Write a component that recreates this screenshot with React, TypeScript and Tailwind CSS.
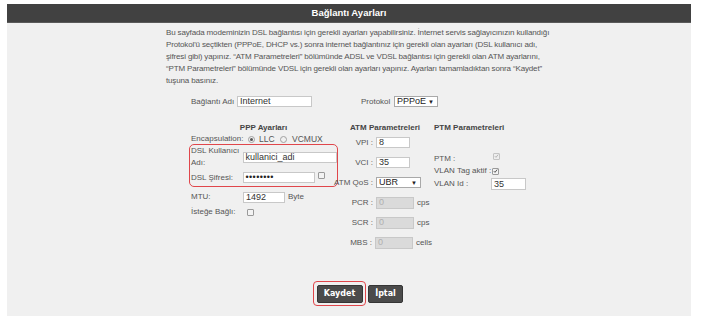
import React from "react";

const F = "font-['Liberation_Sans',Arial,sans-serif]";

function TextInput({ w, value, h = "h-[11px]", disabled = false, pw = false }: { w: string; value: string; h?: string; disabled?: boolean; pw?: boolean }) {
  return (
    <div
      className={`${w} ${h} border border-[#c8c8c8] ${disabled ? "bg-[#dadada] text-[#b0b0b0]" : "bg-white text-[#333]"} flex items-center pl-[2px] text-[9px] leading-none overflow-hidden`}
    >
      {pw ? <span className="tracking-[0.4px] text-[9px] text-[#222]">••••••••</span> : value}
    </div>
  );
}

function Select({ w, value }: { w: string; value: string }) {
  return (
    <div className={`${w} h-[11px] border border-[#a9a9a9] bg-white flex items-center justify-between pl-[2px] pr-[3px] text-[9px] leading-none text-[#222]`}>
      <span>{value}</span>
      <span className="text-[6px]">▼</span>
    </div>
  );
}

function Checkbox({ checked = false, disabled = false }: { checked?: boolean; disabled?: boolean }) {
  return (
    <div className={`w-[7px] h-[7px] border ${disabled ? "border-[#c4c4c4] bg-[#eeeeee]" : "border-[#9a9a9a] bg-[#f3f3f3]"} rounded-[1px] flex items-center justify-center`}>
      {checked && (
        <svg width="6" height="6" viewBox="0 0 6 6">
          <path d="M1 3.2 L2.4 4.6 L5 1.3" fill="none" stroke={disabled ? "#a8a8a8" : "#333"} strokeWidth="1" />
        </svg>
      )}
    </div>
  );
}

function Radio({ checked = false }: { checked?: boolean }) {
  return (
    <div className="w-[7px] h-[7px] rounded-full border border-[#a0a0a0] bg-[#f0f0f0] flex items-center justify-center">
      {checked && <div className="w-[3px] h-[3px] rounded-full bg-[#555]" />}
    </div>
  );
}

function AtmRow({ label, children, mt = "mt-[7px]" }: { label: string; children: React.ReactNode; mt?: string }) {
  return (
    <div className={`flex items-center h-[13px] ${mt}`}>
      <div className="w-[35px] flex justify-end whitespace-nowrap">{label}</div>
      <div className="ml-[3px] flex items-center">{children}</div>
    </div>
  );
}

export default function App() {
  return (
    <div className={`w-[702px] h-[318px] bg-white pt-[4px] pl-[7px] ${F} text-[8px] text-[#555]`}>
      <div className="w-[684px]">
        <div className="h-[19px] bg-[#414141] border-b border-[#5a5a5a] flex items-center justify-center text-white font-bold text-[9.5px]">
          Bağlantı Ayarları
        </div>
        <div className="h-[293px] bg-[#f0f0f0] pt-[4px]">
          <p className="ml-[159px] leading-[12px] whitespace-nowrap text-[#555] tracking-[-0.15px]">
            Bu sayfada modeminizin DSL bağlantısı için gerekli ayarları yapabilirsiniz. İnternet servis sağlayıcınızın kullandığı
            <br />
            Protokol'ü seçtikten (PPPoE, DHCP vs.) sonra internet bağlantınız için gerekli olan ayarları (DSL kullanıcı adı,
            <br />
            şifresi gibi) yapınız. “ATM Parametreleri” bölümünde ADSL ve VDSL bağlantısı için gerekli olan ATM ayarlarını,
            <br />
            “PTM Parametreleri” bölümünde VDSL için gerekli olan ayarları yapınız. Ayarları tamamladıktan sonra “Kaydet”
            <br />
            tuşuna basınız.
          </p>

          <div className="mt-[9px] ml-[184px] flex items-center h-[11px]">
            <span className="w-[46px]">Bağlantı Adı</span>
            <TextInput w="w-[75px]" value="Internet" />
            <span className="ml-[49px] w-[33px]">Protokol</span>
            <Select w="w-[44px]" value="PPPoE" />
          </div>

          <div className="mt-[15px] ml-[182px] flex items-start">
            {/* PPP column */}
            <div className="w-[149px] flex flex-col">
              <div className="h-[11px] leading-[11px] text-center font-bold text-[#444]">PPP Ayarları</div>
              <div className="mt-[1px] h-[10px] flex items-center pl-[2px]">
                <span className="w-[57px]">Encapsulation:</span>
                <Radio checked />
                <span className="ml-[4px] w-[21px] text-[8.5px]">LLC</span>
                <Radio />
                <span className="ml-[5px] text-[8.5px]">VCMUX</span>
              </div>
              <div className="h-[43px] border-[1.5px] border-[#e0464b] rounded-[5px] flex flex-col">
                <div className="h-[24px] flex items-center">
                  <div className="w-[52.5px] pl-[1px] leading-[12px]">
                    DSL Kullanıcı
                    <br />
                    Adı:
                  </div>
                  <TextInput w="w-[94px]" value="kullanici_adi" />
                </div>
                <div className="h-[15px] mt-[1px] flex items-center">
                  <div className="w-[52.5px] pl-[1px]">DSL Şifresi:</div>
                  <TextInput w="w-[72px]" value="" pw />
                  <div className="ml-[3px] -mt-[4px]">
                    <Checkbox />
                  </div>
                </div>
              </div>
              <div className="mt-[3px] h-[14px] flex items-center pl-[2px]">
                <span className="w-[52px]">MTU:</span>
                <TextInput w="w-[42px]" value="1492" />
                <span className="ml-[3px]">Byte</span>
              </div>
              <div className="mt-[1px] h-[14px] flex items-center pl-[2px]">
                <span className="w-[56px]">İsteğe Bağlı:</span>
                <Checkbox />
              </div>
            </div>

            {/* ATM column */}
            <div className="w-[94px] flex flex-col">
              <div className="h-[11px] leading-[11px] text-center font-bold text-[#444]">ATM Parametreleri</div>
              <AtmRow label="VPI :" mt="mt-[3px]">
                <TextInput w="w-[34px]" value="8" />
              </AtmRow>
              <AtmRow label="VCI :">
                <TextInput w="w-[34px]" value="35" />
              </AtmRow>
              <AtmRow label="ATM QoS :">
                <Select w="w-[45px]" value="UBR" />
              </AtmRow>
              <AtmRow label="PCR :">
                <TextInput w="w-[38px]" h="h-[12px]" value="0" disabled />
                <span className="ml-[3px]">cps</span>
              </AtmRow>
              <AtmRow label="SCR :">
                <TextInput w="w-[38px]" h="h-[12px]" value="0" disabled />
                <span className="ml-[3px]">cps</span>
              </AtmRow>
              <AtmRow label="MBS :">
                <TextInput w="w-[38px]" h="h-[12px]" value="0" disabled />
                <span className="ml-[3px]">cells</span>
              </AtmRow>
            </div>

            {/* PTM column */}
            <div className="flex flex-col pl-[2px]">
              <div className="h-[11px] leading-[11px] font-bold text-[#444]">PTM Parametreleri</div>
              <div className="mt-[20px] h-[12px] flex items-center">
                <span className="w-[59px]">PTM :</span>
                <div className="-mt-[6px]">
                  <Checkbox checked disabled />
                </div>
              </div>
              <div className="h-[12px] flex items-center">
                <span className="w-[58px]">VLAN Tag aktif :</span>
                <Checkbox checked />
              </div>
              <div className="mt-[1px] h-[12px] flex items-center">
                <span className="w-[57px]">VLAN Id :</span>
                <TextInput w="w-[35px]" h="h-[12px]" value="35" />
              </div>
            </div>
          </div>

          <div className="mt-[32px] ml-[306px] flex items-center">
            <div className="border-[1.5px] border-[#e0464b] rounded-[4px] p-[2.5px]">
              <div className="w-[46px] h-[18px] bg-[#4b4b4b] border border-[#353535] rounded-[2px] flex items-center justify-center text-white font-bold text-[8px] font-['DejaVu_Sans',Verdana,sans-serif]">
                Kaydet
              </div>
            </div>
            <div className="ml-[2px] w-[35px] h-[18px] bg-[#4b4b4b] border border-[#353535] rounded-[2px] flex items-center justify-center text-white font-bold text-[8px] font-['DejaVu_Sans',Verdana,sans-serif]">
              İptal
            </div>
          </div>
        </div>
      </div>
    </div>
  );
}
